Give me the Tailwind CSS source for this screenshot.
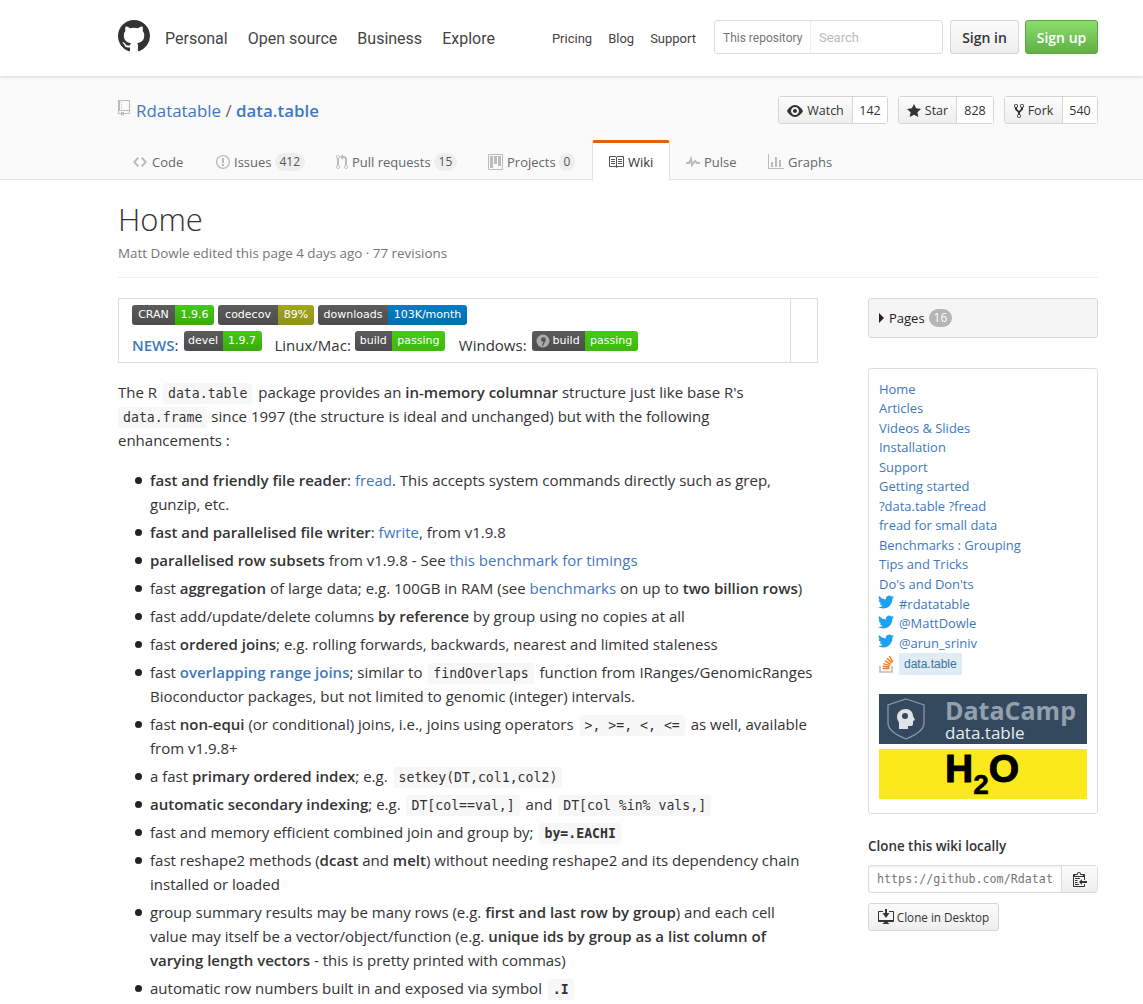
<!DOCTYPE html>
<html lang="en">
<head>
  <meta charset="UTF-8" />
  <title>Home · Rdatatable/data.table Wiki</title>
  <script src="https://cdn.jsdelivr.net/npm/@tailwindcss/browser@4"></script>
</head>
<body class="bg-white text-[#333] h-screen overflow-hidden font-['Open_Sans',sans-serif] text-[15px] leading-6">

  <!-- top header -->
  <header class="h-[76px] bg-white shadow-[0_1px_3px_rgba(0,0,0,0.15)] relative">
    <div class="w-[980px] ml-[118px] h-full flex items-start pt-5 font-[Roboto,sans-serif]">
      <svg class="w-8 h-8 shrink-0 fill-[#333]" viewBox="0 0 16 16"><path d="M8 0C3.58 0 0 3.58 0 8c0 3.54 2.29 6.53 5.47 7.59.4.07.55-.17.55-.38 0-.19-.01-.82-.01-1.49-2.01.37-2.53-.49-2.69-.94-.09-.23-.48-.94-.82-1.13-.28-.15-.68-.52-.01-.53.63-.01 1.08.58 1.23.82.72 1.21 1.87.87 2.33.66.07-.52.28-.87.51-1.07-1.78-.2-3.64-.89-3.64-3.95 0-.87.31-1.59.82-2.15-.08-.2-.36-1.02.08-2.12 0 0 .67-.21 2.2.82.64-.18 1.32-.27 2-.27.68 0 1.36.09 2 .27 1.53-1.04 2.2-.82 2.2-.82.44 1.1.16 1.92.08 2.12.51.56.82 1.27.82 2.15 0 3.07-1.87 3.75-3.65 3.95.29.25.54.73.54 1.48 0 1.07-.01 1.93-.01 2.2 0 .21.15.46.55.38A8.013 8.013 0 0016 8c0-4.42-3.58-8-8-8z"/></svg>
      <nav class="flex gap-5 ml-[15px] text-[16px] leading-[38px] text-[#444] whitespace-nowrap shrink-0">
        <a>Personal</a><a>Open source</a><a>Business</a><a>Explore</a>
      </nav>
      <nav class="flex gap-4 ml-[57px] text-[13px] leading-[38px] text-[#444] whitespace-nowrap shrink-0">
        <a>Pricing</a><a>Blog</a><a>Support</a>
      </nav>
      <div class="flex items-center ml-auto w-[229px] h-[34px] border border-[#ddd] rounded-[3px] bg-white text-[12px]">
        <span class="px-2 pt-[1px] w-[96px] h-full flex items-center border-r border-[#eee] text-[#767676] whitespace-nowrap">This repository</span>
        <span class="px-2 pt-[1px] text-[13px] text-[#bbb]">Search</span>
      </div>
      <a class="ml-[7px] w-[69px] h-[34px] pt-[1px] flex items-center justify-center border border-[#d5d5d5] rounded-[3px] bg-linear-to-b from-[#fcfcfc] to-[#eee] font-['Open_Sans',sans-serif] text-[14px] font-semibold text-[#333]">Sign in</a>
      <a class="ml-[6px] w-[73px] h-[34px] pt-[1px] flex items-center justify-center border border-[#5ca941] rounded-[3px] bg-linear-to-b from-[#8add6d] to-[#60b044] font-['Open_Sans',sans-serif] text-[14px] font-semibold text-white">Sign up</a>
    </div>
  </header>

  <!-- repo head -->
  <div class="h-[104px] bg-[#fafafa] border-b border-[#e5e5e5] pt-5">
    <div class="w-[980px] ml-[118px]">
      <div class="flex items-center h-7">
        <svg class="w-3 h-4 fill-[#bbb] mb-1" viewBox="0 0 12 16"><path d="M4 9H3V8h1v1zm0-3H3v1h1V6zm0-2H3v1h1V4zm0-2H3v1h1V2zm8-1v12c0 .55-.45 1-1 1H6v2l-1.5-1.5L3 16v-2H1c-.55 0-1-.45-1-1V1c0-.55.45-1 1-1h10c.55 0 1 .45 1 1zm-1 10H1v2h2v-1h3v1h5v-2zm0-10H2v9h9V1z"/></svg>
        <h1 class="ml-[6px] mt-[2px] text-[16.9px] text-[#4078c0] whitespace-nowrap">Rdatatable <span class="text-[#666]">/</span> <b class="font-semibold">data.table</b></h1>
        <div class="ml-auto flex gap-[10px] text-[12.5px] text-[#333]">
          <div class="flex h-7 border border-[#d5d5d5] rounded-[3px]">
            <span class="w-[74px] pt-[1px] flex items-center justify-center gap-1 border-r border-[#d5d5d5] bg-linear-to-b from-[#fcfcfc] to-[#eee]">
              <svg class="w-4 h-4 fill-[#333]" viewBox="0 0 16 16"><path d="M8.06 2C3 2 0 8 0 8s3 6 8.06 6C13 14 16 8 16 8s-3-6-7.94-6zM8 12c-2.2 0-4-1.78-4-4 0-2.2 1.8-4 4-4 2.22 0 4 1.8 4 4 0 2.22-1.78 4-4 4zm2-4c0 1.11-.89 2-2 2-1.11 0-2-.89-2-2 0-1.11.89-2 2-2 1.11 0 2 .89 2 2z"/></svg>Watch</span>
            <span class="w-[34px] pt-[1px] flex items-center justify-center bg-white">142</span>
          </div>
          <div class="flex h-7 border border-[#d5d5d5] rounded-[3px]">
            <span class="w-[58px] pt-[1px] flex items-center justify-center gap-1 border-r border-[#d5d5d5] bg-linear-to-b from-[#fcfcfc] to-[#eee]">
              <svg class="w-[14px] h-4 fill-[#333]" viewBox="0 0 14 16"><path d="M14 6l-4.9-.64L7 1 4.9 5.36 0 6l3.6 3.26L2.67 14 7 11.67 11.33 14l-.93-4.74L14 6z"/></svg>Star</span>
            <span class="w-[36px] pt-[1px] flex items-center justify-center bg-white">828</span>
          </div>
          <div class="flex h-7 border border-[#d5d5d5] rounded-[3px]">
            <span class="w-[58px] pt-[1px] flex items-center justify-center gap-1 border-r border-[#d5d5d5] bg-linear-to-b from-[#fcfcfc] to-[#eee]">
              <svg class="w-[10px] h-4 fill-[#333]" viewBox="0 0 10 16"><path d="M8 1a1.993 1.993 0 00-1 3.72V6L5 8 3 6V4.72A1.993 1.993 0 002 1a1.993 1.993 0 00-1 3.72V6.5l3 3v1.78A1.993 1.993 0 005 15a1.993 1.993 0 001-3.72V9.5l3-3V4.72A1.993 1.993 0 008 1zM2 4.2C1.34 4.2.8 3.65.8 3c0-.65.55-1.2 1.2-1.2.65 0 1.2.55 1.2 1.2 0 .65-.55 1.2-1.2 1.2zm3 10c-.66 0-1.2-.55-1.2-1.2 0-.65.55-1.2 1.2-1.2.65 0 1.2.55 1.2 1.2 0 .65-.55 1.2-1.2 1.2zm3-10c-.66 0-1.2-.55-1.2-1.2 0-.65.55-1.2 1.2-1.2.65 0 1.2.55 1.2 1.2 0 .65-.55 1.2-1.2 1.2z"/></svg>Fork</span>
            <span class="w-[34px] pt-[1px] flex items-center justify-center bg-white">540</span>
          </div>
        </div>
      </div>
      <!-- tabs -->
      <nav class="flex mt-4 h-10 text-[13px] text-[#666]">
        <a class="w-[82px] pl-[15px] pt-[3px] flex items-center gap-[5px]"><svg class="w-[14px] h-4 fill-[#bbb]" viewBox="0 0 14 16"><path d="M9.5 3L8 4.5 11.5 8 8 11.5 9.5 13 14 8 9.5 3zm-5 0L0 8l4.5 5L6 11.5 2.5 8 6 4.5 4.5 3z"/></svg>Code</a>
        <a class="w-[120px] pl-[16px] pt-[3px] flex items-center gap-[4px]"><svg class="w-[14px] h-4 fill-[#bbb]" viewBox="0 0 14 16"><path d="M7 2.3c3.14 0 5.7 2.56 5.7 5.7s-2.56 5.7-5.7 5.7A5.71 5.71 0 011.3 8c0-3.14 2.56-5.7 5.7-5.7zM7 1C3.14 1 0 4.14 0 8s3.14 7 7 7 7-3.14 7-7-3.14-7-7-7zm1 3H6v5h2V4zm0 6H6v2h2v-2z"/></svg>Issues<span class="-ml-[1px] px-[5px] rounded-full bg-[#eee] text-[12px] leading-[18px] text-[#555]">412</span></a>
        <a class="w-[152px] pl-[16px] pt-[3px] flex items-center gap-[4px]"><svg class="w-3 h-4 fill-[#bbb]" viewBox="0 0 12 16"><path d="M11 11.28V5c-.03-.78-.34-1.47-.94-2.06C9.46 2.35 8.78 2.03 8 2H7V0L4 3l3 3V4h1c.27.02.48.11.69.31.21.2.3.42.31.69v6.28A1.993 1.993 0 0010 15a1.993 1.993 0 001-3.72zm-1 2.92c-.66 0-1.2-.55-1.2-1.2 0-.65.55-1.2 1.2-1.2.65 0 1.2.55 1.2 1.2 0 .65-.55 1.2-1.2 1.2zM4 3c0-1.11-.89-2-2-2a1.993 1.993 0 00-1 3.72v6.56A1.993 1.993 0 002 15a1.993 1.993 0 001-3.72V4.72c.59-.34 1-.98 1-1.72zm-.8 10c0 .66-.55 1.2-1.2 1.2-.65 0-1.2-.55-1.2-1.2 0-.65.55-1.2 1.2-1.2.65 0 1.2.55 1.2 1.2zM2 4.2C1.34 4.2.8 3.65.8 3c0-.65.55-1.2 1.2-1.2.65 0 1.2.55 1.2 1.2 0 .65-.55 1.2-1.2 1.2z"/></svg>Pull requests<span class="-ml-[1px] px-[5px] rounded-full bg-[#eee] text-[12px] leading-[18px] text-[#555]">15</span></a>
        <a class="w-[120px] pl-[16px] pt-[3px] flex items-center gap-[4px]"><svg class="w-[15px] h-4 fill-[#bbb]" viewBox="0 0 15 16"><path fill-rule="evenodd" d="M10 12h3V2h-3v10zm-4-2h3V2H6v8zm-4 4h3V2H2v12zm-1 1h13V1H1v14zM14 0H1a1 1 0 00-1 1v14a1 1 0 001 1h13a1 1 0 001-1V1a1 1 0 00-1-1z"/></svg>Projects<span class="-ml-[1px] px-[5px] rounded-full bg-[#eee] text-[12px] leading-[18px] text-[#555]">0</span></a>
        <a class="w-[78px] h-[41px] pl-[15px] flex items-center gap-[4px] bg-white border-x border-[#e5e5e5] border-t-[3px] border-t-[#e36209] rounded-t-[3px] text-[#333]"><svg class="w-4 h-4 fill-[#555]" viewBox="0 0 16 16"><path d="M3 5h4v1H3V5zm0 3h4V7H3v1zm0 2h4V9H3v1zm11-5h-4v1h4V5zm0 2h-4v1h4V7zm0 2h-4v1h4V9zm2-6v9c0 .55-.45 1-1 1H9.5l-1 1-1-1H2c-.55 0-1-.45-1-1V3c0-.55.45-1 1-1h5.5l1 1 1-1H15c.55 0 1 .45 1 1zm-8 .5L7.5 3H2v9h6V3.5zm7-.5H9.5l-.5.5V12h6V3z"/></svg>Wiki</a>
        <a class="w-[82px] pl-[16px] pt-[3px] flex items-center gap-[4px]"><svg class="w-[14px] h-4 fill-[#bbb]" viewBox="0 0 14 16"><path d="M11.5 8L8.8 5.4 6.6 8.5 5.5 1.6 2.38 8H0v2h3.6l.9-1.8.9 5.4L9 8.5l1.6 1.5H14V8h-2.5z"/></svg>Pulse</a>
        <a class="pl-[16px] pt-[3px] flex items-center gap-[4px]"><svg class="w-4 h-4 fill-[#bbb]" viewBox="0 0 16 16"><path d="M16 14v1H0V0h1v14h15zM5 13H3V8h2v5zm4 0H7V3h2v10zm4 0h-2V6h2v7z"/></svg>Graphs</a>
      </nav>
    </div>
  </div>

  <!-- wiki page -->
  <div class="w-[980px] ml-[118px]">
    <div class="h-[98px] border-b border-[#eee] pt-[17px]">
      <h2 class="text-[31px] leading-[44px] font-light text-[#333]">Home</h2>
      <p class="mt-[2px] text-[13.4px] leading-5 text-[#767676]">Matt Dowle edited this page 4 days ago · 77 revisions</p>
    </div>

    <div class="flex gap-[50px] mt-5">
      <!-- article -->
      <div class="w-[700px]">
        <div class="flex h-[65px] border border-[#ddd] mb-[17px]">
          <div class="flex-1 pl-[13px] pt-[6px]">
            <div class="flex gap-1 font-['DejaVu_Sans',sans-serif] text-[11px] leading-5 text-white">
              <span class="flex rounded-[3px] overflow-hidden"><span class="w-[43px] bg-linear-to-b from-[#5c5c5c] to-[#4c4c4c] text-center">CRAN</span><span class="w-[39px] bg-linear-to-b from-[#4c1] to-[#3aa90f] text-center">1.9.6</span></span>
              <span class="flex rounded-[3px] overflow-hidden"><span class="w-[60px] bg-linear-to-b from-[#5c5c5c] to-[#4c4c4c] text-center">codecov</span><span class="w-[36px] bg-linear-to-b from-[#a4a61d] to-[#8f911a] text-center">89%</span></span>
              <span class="flex rounded-[3px] overflow-hidden"><span class="w-[70px] bg-linear-to-b from-[#5c5c5c] to-[#4c4c4c] text-center">downloads</span><span class="w-[79px] bg-linear-to-b from-[#007ec6] to-[#006fae] text-center">103K/month</span></span>
            </div>
            <div class="flex items-start mt-[6px] text-[15px] whitespace-nowrap">
              <b class="mt-[2px] font-semibold text-[#4078c0]">NEWS<span class="font-normal text-[#333]">:</span></b>
              <span class="ml-[5px] flex rounded-[3px] overflow-hidden font-['DejaVu_Sans',sans-serif] text-[11px] leading-5 text-white"><span class="w-[39px] bg-linear-to-b from-[#5c5c5c] to-[#4c4c4c] text-center">devel</span><span class="w-[39px] bg-linear-to-b from-[#4c1] to-[#3aa90f] text-center">1.9.7</span></span>
              <span class="mt-[2px] ml-[13px]">Linux/Mac:</span>
              <span class="ml-[4px] flex rounded-[3px] overflow-hidden font-['DejaVu_Sans',sans-serif] text-[11px] leading-5 text-white"><span class="w-[37px] bg-linear-to-b from-[#5c5c5c] to-[#4c4c4c] text-center">build</span><span class="w-[53px] bg-linear-to-b from-[#4c1] to-[#3fb70f] text-center">passing</span></span>
              <span class="mt-[2px] ml-[14px]">Windows:</span>
              <span class="ml-[5px] flex rounded-[3px] overflow-hidden font-['DejaVu_Sans',sans-serif] text-[11px] leading-5 text-white"><span class="w-[53px] bg-linear-to-b from-[#5c5c5c] to-[#4c4c4c] flex items-center gap-[3px] pl-1"><svg class="w-[14px] h-[14px] shrink-0" viewBox="0 0 14 14"><circle cx="7" cy="7" r="6.5" fill="#aaa"/><circle cx="7.4" cy="5.6" r="2.4" fill="#555"/><path d="M9.6 6.5 7 12 5.8 11.4 7.8 7.6z" fill="#555"/></svg>build</span><span class="w-[53px] bg-linear-to-b from-[#4c1] to-[#3fb70f] text-center">passing</span></span>
            </div>
          </div>
          <div class="w-[27px] border-l border-[#ddd]"></div>
        </div>

        <p>The R <code class="mx-[2px] px-[5px] py-[3px] rounded-[3px] bg-[#f7f7f7] font-['DejaVu_Sans_Mono',monospace] text-[13.2px] leading-4">data.table</code> package provides an <b class="font-semibold">in-memory columnar</b> structure just like base R's <code class="px-[5px] py-[3px] rounded-[3px] bg-[#f7f7f7] font-['DejaVu_Sans_Mono',monospace] text-[13.2px] leading-4">data.frame</code> since 1997 (the structure is ideal and unchanged) but with the following<br />enhancements :</p>

        <ul class="list-none pl-8 mt-4 [&>li]:mb-1 [&>li]:relative [&>li]:before:absolute [&>li]:before:-left-[15px] [&>li]:before:top-[9px] [&>li]:before:w-[7px] [&>li]:before:h-[7px] [&>li]:before:rounded-full [&>li]:before:bg-[#222]">
          <li><b class="font-semibold">fast and friendly file reader</b>: <a class="text-[#4078c0]">fread</a>. This accepts system commands directly such as grep, gunzip, etc.</li>
          <li><b class="font-semibold">fast and parallelised file writer</b>: <a class="text-[#4078c0]">fwrite</a>, from v1.9.8</li>
          <li><b class="font-semibold">parallelised row subsets</b> from v1.9.8 - See <a class="text-[#4078c0]">this benchmark for timings</a></li>
          <li>fast <b class="font-semibold">aggregation</b> of large data; e.g. 100GB in RAM (see <a class="text-[#4078c0]">benchmarks</a> on up to <b class="font-semibold">two billion rows</b>)</li>
          <li>fast add/update/delete columns <b class="font-semibold">by reference</b> by group using no copies at all</li>
          <li>fast <b class="font-semibold">ordered joins</b>; e.g. rolling forwards, backwards, nearest and limited staleness</li>
          <li>fast <a class="font-semibold text-[#4078c0]">overlapping range joins</a>; similar to <code class="mx-[2px] px-[5px] py-[3px] rounded-[3px] bg-[#f7f7f7] font-['DejaVu_Sans_Mono',monospace] text-[13.2px] leading-4">findOverlaps</code> function from IRanges/GenomicRanges Bioconductor packages, but not limited to genomic (integer) intervals.</li>
          <li>fast <b class="font-semibold">non-equi</b> (or conditional) joins, i.e., joins using operators <code class="mx-[2px] px-[5px] py-[3px] rounded-[3px] bg-[#f7f7f7] font-['DejaVu_Sans_Mono',monospace] text-[13.2px] leading-4">&gt;, &gt;=, &lt;, &lt;=</code> as well, available from v1.9.8+</li>
          <li>a fast <b class="font-semibold">primary ordered index</b>; e.g. <code class="mx-[2px] px-[5px] py-[3px] rounded-[3px] bg-[#f7f7f7] font-['DejaVu_Sans_Mono',monospace] text-[13.2px] leading-4">setkey(DT,col1,col2)</code></li>
          <li><b class="font-semibold">automatic secondary indexing</b>; e.g. <code class="mx-[2px] px-[5px] py-[3px] rounded-[3px] bg-[#f7f7f7] font-['DejaVu_Sans_Mono',monospace] text-[13.2px] leading-4">DT[col==val,]</code> and <code class="mx-[2px] px-[5px] py-[3px] rounded-[3px] bg-[#f7f7f7] font-['DejaVu_Sans_Mono',monospace] text-[13.2px] leading-4">DT[col %in% vals,]</code></li>
          <li>fast and memory efficient combined join and group by; <code class="mx-[2px] px-[5px] py-[3px] rounded-[3px] bg-[#f7f7f7] font-['DejaVu_Sans_Mono',monospace] text-[13.2px] leading-4 font-bold">by=.EACHI</code></li>
          <li>fast reshape2 methods (<b class="font-semibold">dcast</b> and <b class="font-semibold">melt</b>) without needing reshape2 and its dependency chain installed or loaded</li>
          <li>group summary results may be many rows (e.g. <b class="font-semibold">first and last row by group</b>) and each cell<br />value may itself be a vector/object/function (e.g. <b class="font-semibold">unique ids by group as a list column of<br />varying length vectors</b> - this is pretty printed with commas)</li>
          <li>automatic row numbers built in and exposed via symbol <code class="mx-[2px] px-[5px] py-[3px] rounded-[3px] bg-[#f7f7f7] font-['DejaVu_Sans_Mono',monospace] text-[13.2px] leading-4 font-bold">.I</code></li>
        </ul>
      </div>

      <!-- sidebar -->
      <aside class="w-[230px]">
        <div class="h-10 flex items-center pl-[10px] gap-[5px] bg-[#f5f5f5] border border-[#d8d8d8] rounded-[3px] text-[13px] text-[#222]">
          <span class="w-0 h-0 border-y-[5px] border-y-transparent border-l-[5px] border-l-[#222]"></span>
          Pages
          <span class="-ml-[1px] px-[5px] rounded-full bg-[#b5b5b5] text-[12px] leading-[18px] text-white">16</span>
        </div>

        <div class="mt-[30px] h-[446px] border border-[#ddd] rounded-[3px] px-[10px] pt-[10.5px] text-[12.95px] leading-[19.55px] text-[#4078c0]">
          <a class="block">Home</a>
          <a class="block">Articles</a>
          <a class="block">Videos &amp; Slides</a>
          <a class="block">Installation</a>
          <a class="block">Support</a>
          <a class="block">Getting started</a>
          <a class="block">?data.table ?fread</a>
          <a class="block">fread for small data</a>
          <a class="block">Benchmarks : Grouping</a>
          <a class="block">Tips and Tricks</a>
          <a class="block">Do's and Don'ts</a>
          <a class="flex items-center gap-[5px]"><svg class="w-[16px] h-[16px] -ml-[1px] fill-[#1da1f2] -mt-1" viewBox="0 0 24 24"><path d="M23.953 4.57a10 10 0 01-2.825.775 4.958 4.958 0 002.163-2.723c-.951.555-2.005.959-3.127 1.184a4.92 4.92 0 00-8.384 4.482C7.69 8.095 4.067 6.13 1.64 3.162a4.822 4.822 0 00-.666 2.475c0 1.71.87 3.213 2.188 4.096a4.904 4.904 0 01-2.228-.616v.06a4.923 4.923 0 003.946 4.827 4.996 4.996 0 01-2.212.085 4.936 4.936 0 004.604 3.417 9.867 9.867 0 01-6.102 2.105c-.39 0-.779-.023-1.17-.067a13.995 13.995 0 007.557 2.209c9.053 0 13.998-7.496 13.998-13.985 0-.21 0-.42-.015-.63A9.935 9.935 0 0024 4.59z"/></svg>#rdatatable</a>
          <a class="flex items-center gap-[5px]"><svg class="w-[16px] h-[16px] -ml-[1px] fill-[#1da1f2] -mt-1" viewBox="0 0 24 24"><path d="M23.953 4.57a10 10 0 01-2.825.775 4.958 4.958 0 002.163-2.723c-.951.555-2.005.959-3.127 1.184a4.92 4.92 0 00-8.384 4.482C7.69 8.095 4.067 6.13 1.64 3.162a4.822 4.822 0 00-.666 2.475c0 1.71.87 3.213 2.188 4.096a4.904 4.904 0 01-2.228-.616v.06a4.923 4.923 0 003.946 4.827 4.996 4.996 0 01-2.212.085 4.936 4.936 0 004.604 3.417 9.867 9.867 0 01-6.102 2.105c-.39 0-.779-.023-1.17-.067a13.995 13.995 0 007.557 2.209c9.053 0 13.998-7.496 13.998-13.985 0-.21 0-.42-.015-.63A9.935 9.935 0 0024 4.59z"/></svg>@MattDowle</a>
          <a class="flex items-center gap-[5px]"><svg class="w-[16px] h-[16px] -ml-[1px] fill-[#1da1f2] -mt-1" viewBox="0 0 24 24"><path d="M23.953 4.57a10 10 0 01-2.825.775 4.958 4.958 0 002.163-2.723c-.951.555-2.005.959-3.127 1.184a4.92 4.92 0 00-8.384 4.482C7.69 8.095 4.067 6.13 1.64 3.162a4.822 4.822 0 00-.666 2.475c0 1.71.87 3.213 2.188 4.096a4.904 4.904 0 01-2.228-.616v.06a4.923 4.923 0 003.946 4.827 4.996 4.996 0 01-2.212.085 4.936 4.936 0 004.604 3.417 9.867 9.867 0 01-6.102 2.105c-.39 0-.779-.023-1.17-.067a13.995 13.995 0 007.557 2.209c9.053 0 13.998-7.496 13.998-13.985 0-.21 0-.42-.015-.63A9.935 9.935 0 0024 4.59z"/></svg>@arun_sriniv</a>
          <a class="flex items-center gap-[5px] h-[22px]">
            <svg class="w-[15px] h-[18px]" viewBox="0 0 15 18"><path d="M1 11v6h12v-6" fill="none" stroke="#bcbbbb" stroke-width="1.6"/><path d="M3.5 13.5h7M3.7 11.2l6.8.9M4.4 8.6l6.5 2M6 5.9l5.8 3.5M8 3.4l5 4.6M10.4 1.2l3.4 5.6" fill="none" stroke="#f48024" stroke-width="1.5"/></svg>
            <span class="px-[5px] bg-[#e1ecf4] font-['Liberation_Sans',sans-serif] text-[12px] leading-[22px] text-[#39739d]">data.table</span>
          </a>
          <div class="mt-[19px] h-[50px] bg-[#35495e] flex items-center">
            <svg class="ml-[7px] w-[40px] h-[42px]" viewBox="0 0 40 42"><path d="M20 1 38 7v18c0 7-8 12-18 16C10 37 2 32 2 25V7z" fill="none" stroke="#8b98a6" stroke-width="1.3"/><path d="M20 11c-5 0-9 3-9 8 0 3 2 4 2 6v6h9v-3h3c1 0 2-1 2-2v-3l2-1-2-4c0-4-3-7-7-7z" fill="#dfe3e8"/><circle cx="19" cy="18" r="3" fill="#35495e"/></svg>
            <div class="ml-[19px] font-bold">
              <div class="text-[25px] leading-[27px] text-[#93a0ad]">DataCamp</div>
              <div class="text-[17px] leading-[17px] font-normal text-[#e8edf2]">data.table</div>
            </div>
          </div>
          <div class="mt-[5px] h-[50px] pl-[66px] bg-[#fbe91c] flex items-start font-['Liberation_Sans',sans-serif] font-bold text-black text-[39px] leading-[40px] overflow-hidden [-webkit-text-stroke:1px_black]">H<span class="text-[28px] leading-[24px] mt-[24px] [-webkit-text-stroke:0.5px_black]">2</span>O</div>
        </div>

        <h3 class="mt-[22px] text-[13.4px] leading-5 font-semibold text-[#333]">Clone this wiki locally</h3>
        <div class="flex mt-[9px] h-7 border border-[#ddd] rounded-[3px] text-[12px]">
          <span class="w-[193px] pl-2 pr-[7px] border-r border-[#ddd] shadow-[inset_0_1px_2px_rgba(0,0,0,0.075)]"><span class="block overflow-hidden whitespace-nowrap font-['DejaVu_Sans_Mono',monospace] text-[11.7px] leading-[26px] text-[#767676]">https://github.com/Rdatatable/data.table.wiki.git</span></span>
          <span class="flex-1 flex items-center justify-center bg-linear-to-b from-[#fcfcfc] to-[#eee]"><svg class="w-[14px] h-4 fill-[#333]" viewBox="0 0 14 16"><path d="M2 13h4v1H2v-1zm5-6H2v1h5V7zm2 3V8l-3 3 3 3v-2h5v-2H9zM4.5 9H2v1h2.5V9zM2 12h2.5v-1H2v1zm9 1h1v2c-.02.28-.11.52-.3.7-.19.18-.42.28-.7.3H1c-.55 0-1-.45-1-1V4c0-.55.45-1 1-1h3c0-1.11.89-2 2-2 1.11 0 2 .89 2 2h3c.55 0 1 .45 1 1v5h-1V6H1v9h10v-2zM2 5h8c0-.55-.45-1-1-1H8c-.55 0-1-.45-1-1s-.45-1-1-1-1 .45-1 1-.45 1-1 1H3c-.55 0-1 .45-1 1z"/></svg></span>
        </div>
        <a class="mt-[10px] w-[131px] h-7 flex items-center justify-center gap-[3px] border border-[#d5d5d5] rounded-[3px] bg-linear-to-b from-[#fcfcfc] to-[#eee] text-[11.7px] text-[#333]"><svg class="w-4 h-4 fill-[#333]" viewBox="0 0 16 16"><path d="M15 2h-4v1h4v8H1V3h4V2H1c-.55 0-1 .45-1 1v9c0 .55.45 1 1 1h5.34c-.25.61-.86 1.39-2.34 2h8c-1.48-.61-2.09-1.39-2.34-2H15c.55 0 1-.45 1-1V3c0-.55-.45-1-1-1zM7 0v4H4.5L8 9l3.5-5H9V0z"/></svg>Clone in Desktop</a>
      </aside>
    </div>
  </div>
</body>
</html>
